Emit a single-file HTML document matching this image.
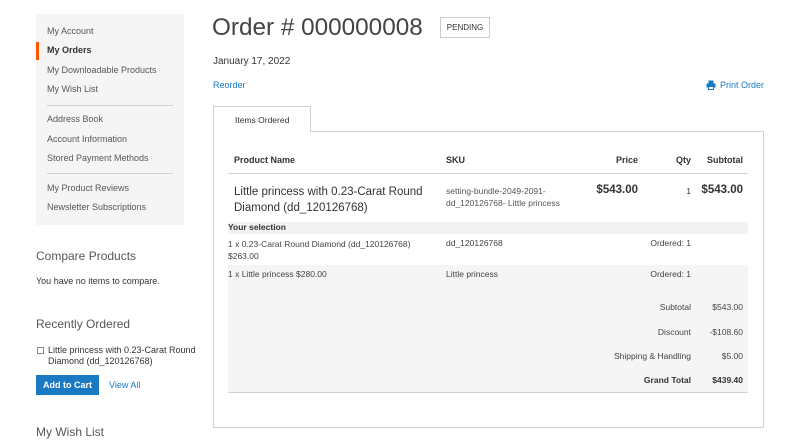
<!DOCTYPE html>
<html><head><meta charset="utf-8"><style>
*{margin:0;padding:0;box-sizing:border-box}
body{width:800px;height:446px;background:#fff;font-family:"Liberation Sans",sans-serif;color:#333;position:relative;overflow:hidden;font-size:9px}
.a{position:absolute;white-space:nowrap}
.side{position:absolute;left:36px;top:14px;width:148px;height:211px;background:#f5f5f5}
.side .a{left:11px;color:#575757;font-size:9px}
.hr{position:absolute;left:11px;width:126px;height:1px;background:#d1d1d1}
.blue{color:#1979c3}
.r{text-align:right}
</style></head><body>
<div class="side">
<div style="position:absolute;left:0;top:28px;width:3px;height:18px;background:#ff5501"></div>
<div class="a" style="top:12px">My Account</div>
<div class="a" style="top:31px;color:#333;font-weight:bold">My Orders</div>
<div class="a" style="top:51px">My Downloadable Products</div>
<div class="a" style="top:70px">My Wish List</div>
<div class="hr" style="top:91px"></div>
<div class="a" style="top:100px">Address Book</div>
<div class="a" style="top:120px">Account Information</div>
<div class="a" style="top:139px">Stored Payment Methods</div>
<div class="hr" style="top:159px"></div>
<div class="a" style="top:169px">My Product Reviews</div>
<div class="a" style="top:188px">Newsletter Subscriptions</div>
</div>
<div class="a" style="left:36px;top:249px;font-size:12px;color:#575757">Compare Products</div>
<div class="a" style="left:36px;top:276px;font-size:9px">You have no items to compare.</div>
<div class="a" style="left:36px;top:317px;font-size:12px;color:#575757">Recently Ordered</div>
<div class="a" style="left:37px;top:347px;width:7px;height:7px;border:1px solid #888;background:#fff"></div>
<div class="a" style="left:48px;top:345px;font-size:9px;line-height:11px">Little princess with 0.23-Carat Round<br>Diamond (dd_120126768)</div>
<div class="a" style="left:36px;top:375px;width:63px;height:20px;background:#1979c3;color:#fff;font-weight:bold;font-size:9px;text-align:center;line-height:20px">Add to Cart</div>
<div class="a blue" style="left:109px;top:380px;font-size:9px">View All</div>
<div class="a" style="left:36px;top:425px;font-size:12px;color:#575757">My Wish List</div>

<div class="a" style="left:212px;top:14px;font-size:24.3px;color:#444">Order # 000000008</div>
<div class="a" style="left:440px;top:17px;width:50px;height:21px;border:1px solid #ccc;font-size:8px;line-height:19px;text-align:center;color:#333">PENDING</div>
<div class="a" style="left:213px;top:56px;font-size:10px">January 17, 2022</div>
<div class="a blue" style="left:213px;top:80px;font-size:9px">Reorder</div>
<svg class="a" style="left:706px;top:80px" width="10" height="10" viewBox="0 0 10 10"><rect x="2.5" y="0.5" width="5" height="3" fill="#1979c3"/><rect x="0.5" y="3.5" width="9" height="4" fill="#1979c3"/><rect x="2.5" y="6.5" width="5" height="3" fill="#fff" stroke="#1979c3"/></svg>
<div class="a blue" style="left:720px;top:80px;font-size:9px">Print Order</div>

<div class="a" style="left:213px;top:131px;width:551px;height:297px;border:1px solid #d1d1d1"></div>
<div class="a" style="left:213px;top:106px;width:98px;height:26px;border:1px solid #d1d1d1;border-bottom:none;background:#fff;font-size:8.5px;padding:8px 0 0 21px;color:#333">Items Ordered</div>

<div class="a" style="left:234px;top:155px;font-weight:bold;font-size:9px">Product Name</div>
<div class="a" style="left:446px;top:155px;font-weight:bold;font-size:9px">SKU</div>
<div class="a r" style="left:580px;width:58px;top:155px;font-weight:bold;font-size:9px">Price</div>
<div class="a r" style="left:650px;width:41px;top:155px;font-weight:bold;font-size:9px">Qty</div>
<div class="a r" style="left:693px;width:50px;top:155px;font-weight:bold;font-size:9px">Subtotal</div>
<div class="a" style="left:228px;top:173px;width:520px;height:1px;background:#d1d1d1"></div>
<div class="a" style="left:234px;top:184px;font-size:11.5px;line-height:16px">Little princess with 0.23-Carat Round<br>Diamond (dd_120126768)</div>
<div class="a" style="left:446px;top:185px;font-size:8.5px;line-height:12px;color:#555">setting-bundle-2049-2091-<br>dd_120126768- Little princess</div>
<div class="a r" style="left:560px;width:78px;top:184px;font-size:11.5px;font-weight:bold">$543.00</div>
<div class="a r" style="left:650px;width:41px;top:186px;font-size:8.5px">1</div>
<div class="a r" style="left:693px;width:50px;top:184px;font-size:11.5px;font-weight:bold">$543.00</div>

<div class="a" style="left:228px;top:222px;width:520px;height:12px;background:#f2f2f2"></div>
<div class="a" style="left:228px;top:222px;font-weight:bold;font-size:8.5px">Your selection</div>
<div class="a" style="left:228px;top:238px;font-size:8.5px;line-height:12px;color:#444">1 x 0.23-Carat Round Diamond (dd_120126768)<br>$263.00</div>
<div class="a" style="left:446px;top:238px;font-size:8.5px;color:#444">dd_120126768</div>
<div class="a r" style="left:600px;width:91px;top:238px;font-size:8.5px;color:#444">Ordered: 1</div>
<div class="a" style="left:228px;top:265px;width:520px;height:128px;background:#f5f5f5;border-bottom:1px solid #d1d1d1"></div>
<div class="a" style="left:228px;top:269px;font-size:8.5px;color:#444">1 x Little princess $280.00</div>
<div class="a" style="left:446px;top:269px;font-size:8.5px;color:#444">Little princess</div>
<div class="a r" style="left:600px;width:91px;top:269px;font-size:8.5px;color:#444">Ordered: 1</div>
<div class="a r" style="left:560px;width:131px;top:302px;font-size:8.5px;color:#444">Subtotal</div>
<div class="a r" style="left:693px;width:50px;top:302px;font-size:8.5px;color:#444">$543.00</div>
<div class="a r" style="left:560px;width:131px;top:327px;font-size:8.5px;color:#444">Discount</div>
<div class="a r" style="left:693px;width:50px;top:327px;font-size:8.5px;color:#444">-$108.60</div>
<div class="a r" style="left:560px;width:131px;top:351px;font-size:8.5px;color:#444">Shipping &amp; Handling</div>
<div class="a r" style="left:693px;width:50px;top:351px;font-size:8.5px;color:#444">$5.00</div>
<div class="a r" style="left:560px;width:131px;top:375px;font-size:8.5px;font-weight:bold">Grand Total</div>
<div class="a r" style="left:693px;width:50px;top:375px;font-size:8.5px;font-weight:bold">$439.40</div>
</body></html>
